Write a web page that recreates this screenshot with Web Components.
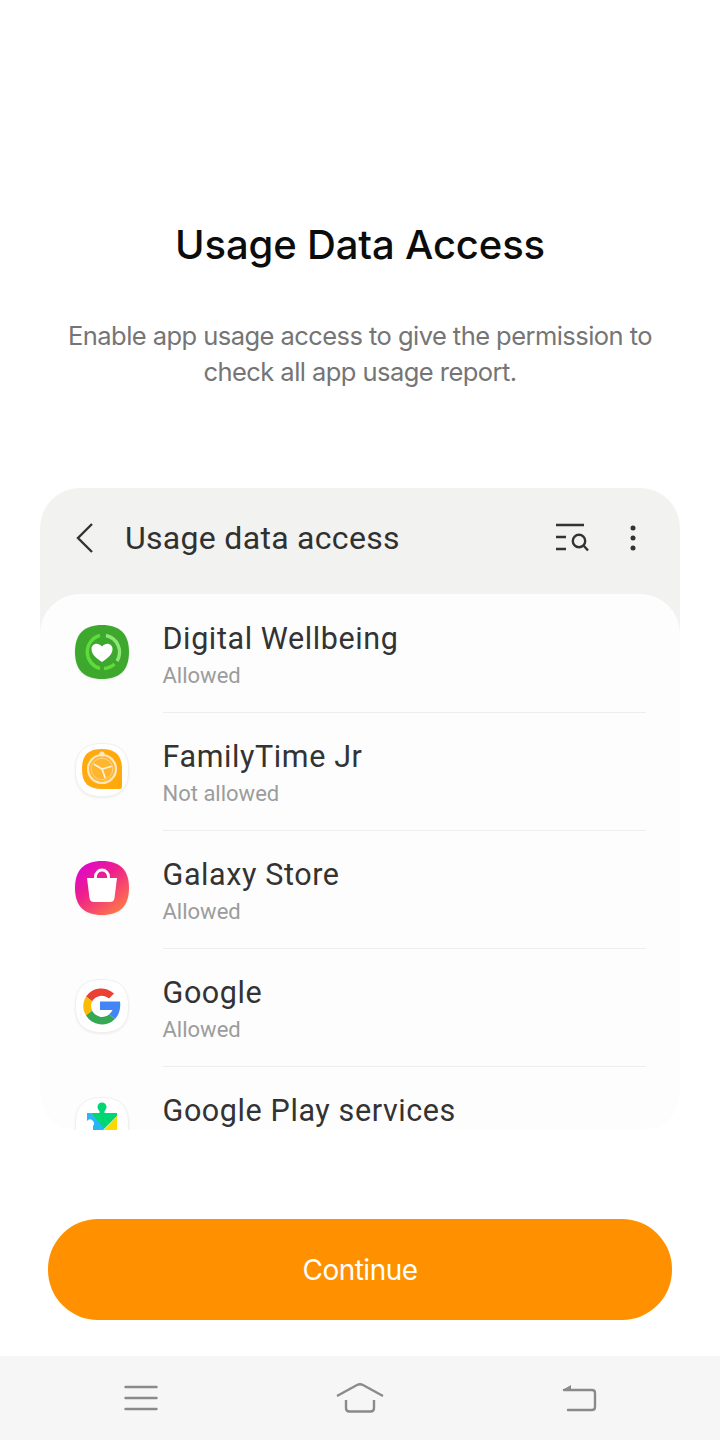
<!DOCTYPE html>
<html>
<head>
<meta charset="utf-8">
<title>Usage Data Access</title>
<style>
  html, body { margin: 0; padding: 0; background: #fff; }
  body { width: 720px; height: 1440px; overflow: hidden; font-family: Inter, "Liberation Sans", sans-serif; display: flex; flex-direction: column; }
</style>
</head>
<body>
<intro-block title-text="Usage Data Access">Enable app usage access to give the permission to<br>check all app usage report.</intro-block>

<settings-preview heading="Usage data access">
  <app-row name="Digital Wellbeing" status="Allowed">
    <svg viewBox="0 0 54 54" width="54" height="54">
      <path d="M27 0C45 0 54 9 54 27S45 54 27 54 0 45 0 27 9 0 27 0Z" fill="#3ea72d"/>
      <path d="M25 10.500A17 17 0 0 0 25 43.400" fill="none" stroke="#5fdc3c" stroke-width="3.400"/>
      <path d="M31 10.500A17 17 0 0 1 42 36" fill="none" stroke="#8ee578" stroke-width="3.400"/>
      <path d="M39.500 39A17 17 0 0 1 29 43.500" fill="none" stroke="#5fdc3c" stroke-width="3.400"/>
      <path d="M27 37C21 33 16.500 29.500 16.500 24C16.500 19 22.500 16.500 27 21.500C31.500 16.500 37.500 19 37.500 24C37.500 29.500 33 33 27 37Z" fill="#fff"/>
    </svg>
  </app-row>
  <app-row name="FamilyTime Jr" status="Not allowed">
    <svg viewBox="0 0 54 54" width="54" height="54">
      <path d="M27 .5C45 .5 53.500 9 53.500 27S45 53.500 27 53.500 .5 45 .5 27 9 .5 27 .5Z" fill="#fff" stroke="#efefed"/>
      <path d="M27 6C40 6 47 12 47 26V44Q47 46 45 46H27C13 46 7 40 7 26S13 6 27 6Z" fill="#ffa90d"/>
      <circle cx="27" cy="26" r="14" fill="#ffb52e" stroke="#ffe7bb" stroke-width="2.200"/>
      <circle cx="27" cy="26" r="10.800" fill="none" stroke="#ffd587" stroke-width="1"/>
      <circle cx="27" cy="11" r="2.600" fill="#ffe7bb"/>
      <path d="M27 26L19.500 21.500M27 26L36 23.500M27 26L30 34.500" stroke="#fff1d6" stroke-width="1.800" fill="none" stroke-linecap="round"/>
    </svg>
  </app-row>
  <app-row name="Galaxy Store" status="Allowed">
    <svg viewBox="0 0 54 54" width="54" height="54">
      <defs>
        <linearGradient id="store" x1="0" y1="0" x2=".8" y2="1">
          <stop offset="0" stop-color="#d800e0"/>
          <stop offset=".45" stop-color="#ee1f8c"/>
          <stop offset="1" stop-color="#ff7a45"/>
        </linearGradient>
      </defs>
      <path d="M27 0C45 0 54 9 54 27S45 54 27 54 0 45 0 27 9 0 27 0Z" fill="url(#store)"/>
      <path d="M20.500 17V15.500A6.500 6.500 0 0 1 33.500 15.500V17" fill="none" stroke="#fff" stroke-width="2.800"/>
      <path d="M12 17H42L39.500 37C39 40 37.500 41 35 41H19C16.500 41 15 40 14.500 37Z" fill="#fff"/>
    </svg>
  </app-row>
  <app-row name="Google" status="Allowed">
    <svg viewBox="0 0 54 54" width="54" height="54">
      <path d="M27 .5C45 .5 53.500 9 53.500 27S45 53.500 27 53.500 .5 45 .5 27 9 .5 27 .5Z" fill="#fff" stroke="#efefed"/>
      <path d="M39 14.500A18.500 18.500 0 0 0 11 17.500L17.200 22.300A11 11 0 0 1 34 19.500Z" fill="#e94235"/>
      <path d="M11 17.500A18.500 18.500 0 0 0 11 36.500L17.200 31.700A11 11 0 0 1 17.200 22.300Z" fill="#fabb05"/>
      <path d="M11 36.500A18.500 18.500 0 0 0 40 40L34.300 35.200A11 11 0 0 1 17.200 31.700Z" fill="#34a853"/>
      <path d="M45 22.500H25V31H37.500A11 11 0 0 1 34.300 35.200L40 40C44 36 46 29 45 22.500Z" fill="#4285f4"/>
    </svg>
  </app-row>
  <app-row name="Google Play services">
    <svg viewBox="0 0 54 54" width="54" height="54">
      <path d="M27 .5C45 .5 53.500 9 53.500 27S45 53.500 27 53.500 .5 45 .5 27 9 .5 27 .5Z" fill="#fff" stroke="#efefed"/>
      <circle cx="27" cy="10" r="4.500" fill="#00d672"/>
      <path d="M24.500 12H29.500V16H42V19L28 33L16 16H24.500Z" fill="#00d672"/>
      <path d="M12 16H16L28 30V33H18V29A3.500 3.500 0 0 0 12 24Z" fill="#29b6f6"/>
      <path d="M42 19V33H29Z" fill="#ffd600"/>
    </svg>
  </app-row>
</settings-preview>

<primary-button>Continue</primary-button>
<nav-bar></nav-bar>

<script>
class IntroBlock extends HTMLElement {
  constructor() {
    super();
    this.shadowDOM = this.attachShadow({mode: 'open'});
  }
  connectedCallback() {
    this.shadowDOM.innerHTML = `
      <style>
        :host { display: block; height: 488px; padding-top: 220px; box-sizing: border-box; text-align: center; font-family: Inter, "Liberation Sans", sans-serif; }
        h1 { margin: 0; font-size: 40px; line-height: 50px; font-weight: 500; color: #0c0c0c; letter-spacing: -0.15px; }
        p { margin: 48px 0 0; font-size: 25.500px; line-height: 36px; color: #757575; letter-spacing: -0.55px; }
      </style>
      <h1>${this.getAttribute('title-text')}</h1>
      <p><slot></slot></p>
    `;
  }
}

class SettingsPreview extends HTMLElement {
  constructor() {
    super();
    this.shadowDOM = this.attachShadow({mode: 'open'});
  }
  connectedCallback() {
    this.shadowDOM.innerHTML = `
      <style>
        :host { display: block; width: 640px; height: 642px; margin: 0 40px; border-radius: 40px 40px 36px 36px; background: linear-gradient(#f2f2f0 0 160px, transparent 160px); overflow: hidden; font-family: Roboto, "Liberation Sans", sans-serif; }
        header { height: 106px; display: flex; align-items: center; padding: 0 43px 6px 33px; box-sizing: border-box; color: #303030; }
        .title { font-size: 32px; letter-spacing: 0.3px; margin-left: 27px; flex: 1; }
        .back { display: block; }
        .search { display: block; margin-right: 40px; }
        .list { background: #fdfdfd; height: 536px; border-radius: 40px 40px 36px 36px; overflow: hidden; padding: 1px 34px 0; box-sizing: border-box; }
      </style>
      <header>
        <svg class="back" width="25" height="32" viewBox="0 0 25 32"><path d="M19 2L5 16L19 30" fill="none" stroke="#333" stroke-width="2.400"/></svg>
        <span class="title">${this.getAttribute('heading')}</span>
        <svg class="search" width="34" height="30" viewBox="0 0 34 30" fill="none" stroke="#333" stroke-width="2.400">
          <path d="M1 2H29M1 14H11M1 26H11"/>
          <circle cx="24" cy="18" r="6.200"/>
          <path d="M28.500 22.500L33 27.500"/>
        </svg>
        <svg width="8" height="28" viewBox="0 0 8 28" fill="#333"><circle cx="4" cy="4" r="2.500"/><circle cx="4" cy="14" r="2.500"/><circle cx="4" cy="24" r="2.500"/></svg>
      </header>
      <div class="list"><slot></slot></div>
    `;
  }
}

class AppRow extends HTMLElement {
  constructor() {
    super();
    this.shadowDOM = this.attachShadow({mode: 'open'});
  }
  connectedCallback() {
    // the last row is cut by the list, so it can come without a status
    const status = this.getAttribute('status');
    this.shadowDOM.innerHTML = `
      <style>
        :host { display: flex; height: 118px; align-items: flex-start; font-family: Roboto, "Liberation Sans", sans-serif; }
        .icon { width: 54px; height: 54px; margin: 30px 33.500px 0 1px; flex: none; }
        ::slotted(svg) { display: block; filter: drop-shadow(0 1px 1px rgba(0,0,0,.07)); }
        .text { flex: 1; height: 118px; box-sizing: border-box; border-bottom: 1px solid #eeeeee; padding-top: 24px; }
        .name { font-size: 30.500px; line-height: 40px; color: #333; letter-spacing: 0.6px; }
        .status { font-size: 22px; line-height: 32px; color: #9c9c9c; margin-top: 1px; }
      </style>
      <div class="icon"><slot></slot></div>
      <div class="text">
        <div class="name">${this.getAttribute('name')}</div>
        ${status ? `<div class="status">${status}</div>` : ''}
      </div>
    `;
  }
}

class PrimaryButton extends HTMLElement {
  constructor() {
    super();
    this.shadowDOM = this.attachShadow({mode: 'open'});
  }
  connectedCallback() {
    this.shadowDOM.innerHTML = `
      <style>
        :host { display: flex; align-items: center; justify-content: center; height: 101px; margin: 89px 48px 36px; border-radius: 50px; background: #ff9100; color: #fff; font-family: Inter, "Liberation Sans", sans-serif; font-size: 28px; letter-spacing: -0.5px; }
      </style>
      <slot></slot>
    `;
  }
}

class NavBar extends HTMLElement {
  constructor() {
    super();
    this.shadowDOM = this.attachShadow({mode: 'open'});
  }
  connectedCallback() {
    this.shadowDOM.innerHTML = `
      <style>
        :host { display: flex; height: 84px; background: #f6f6f6; align-items: center; justify-content: space-between; padding: 0 123px 0 123.500px; box-sizing: border-box; }
        svg { display: block; }
        .home { margin-left: 2px; }
      </style>
      <svg width="34" height="26" viewBox="0 0 34 26" fill="none" stroke="#8a8a8a" stroke-width="2.400" stroke-linecap="round"><path d="M1.500 2H32.500M1.500 13H32.500M1.500 24H32.500"/></svg>
      <svg class="home" width="48" height="30" viewBox="0 0 48 30" fill="none" stroke="#8a8a8a" stroke-width="2.400"><path d="M1 13L21 2Q24 .5 27 2L47 13"/><path d="M10 17V25Q10 28.500 13.500 28.500H34.500Q38 28.500 38 25V17"/></svg>
      <svg width="36" height="28" viewBox="0 0 36 28" fill="none" stroke="#8a8a8a" stroke-width="2.400" stroke-linecap="round"><path d="M3 6H31Q34 6 34 9V23Q34 26 31 26H7"/><path d="M1.500 6L10 1V6Z" fill="#8a8a8a" stroke="none"/></svg>
    `;
  }
}

customElements.define('intro-block', IntroBlock);
customElements.define('settings-preview', SettingsPreview);
customElements.define('app-row', AppRow);
customElements.define('primary-button', PrimaryButton);
customElements.define('nav-bar', NavBar);
</script>
</body>
</html>
